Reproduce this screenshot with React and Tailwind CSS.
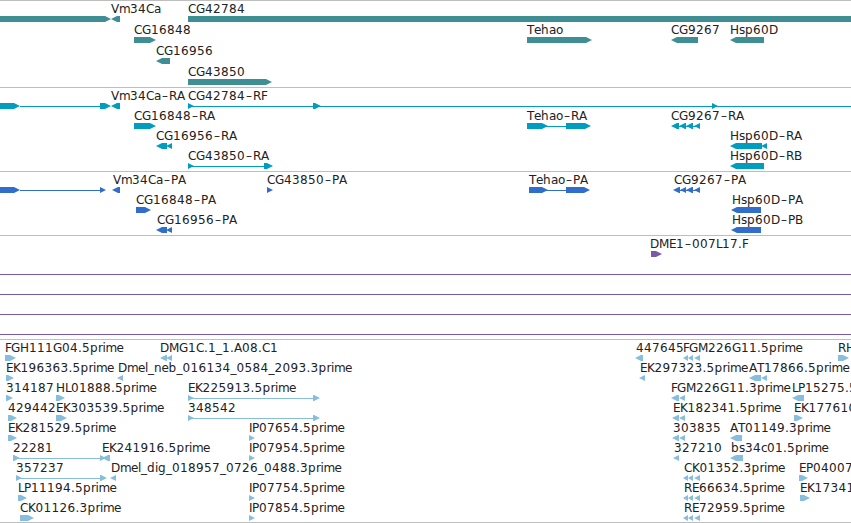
// Pen advance of each character, in px
const ADVANCE = {
  A: 8, B: 7, C: 8, D: 9, E: 7, F: 6, G: 9, H: 9, I: 3, K: 7.5, L: 6, M: 10,
  P: 7, R: 8, T: 7, V: 8, a: 7, b: 8, c: 6, d: 8, e: 7, g: 8, h: 8, i: 3,
  l: 3, m: 11, n: 7.5, o: 7, p: 8, r: 4.5, s: 6, "–": 8, ".": 4, _: 6,
};

// spans: [start, end, direction] where direction is 1 (forward) or -1 (reverse)
const f = (row, name, x, spans, lines = []) => ({ row, name, x, spans, lines });

const reads = (x) => [[x, 688, -1], [688, 693, -1], [694, 700, -1]];

const tracks = [
  {
    height: "h-[87px]",
    color: "fill-[#3f8e94]",
    pitch: 21,
    features: [
      f(0, "", 0, [[-10, 111, 1]]),
      f(0, "Vm34Ca", 111, [[111, 120, -1]]),
      f(0, "CG42784", 188, [[188, 870, 1]]),
      f(1, "CG16848", 134, [[134, 156, 1]]),
      f(1, "Tehao", 527, [[527, 592, 1]]),
      f(1, "CG9267", 671, [[671, 698, -1]]),
      f(1, "Hsp60D", 730, [[730, 764, -1]]),
      f(2, "CG16956", 156, [[156, 170, -1]]),
      f(3, "CG43850", 188, [[188, 272, 1]]),
    ],
  },
  {
    height: "h-[84px]",
    color: "fill-[#009dbf]",
    pitch: 20,
    features: [
      f(0, "", 0, [[-10, 20, 1], [100, 111, 1]], [[20, 100]]),
      f(0, "Vm34Ca–RA", 111, [[111, 120, -1]]),
      f(0, "CG42784–RF", 188, [[188, 194, 1], [313, 321, 1], [712, 718, 1]], [[188, 860]]),
      f(1, "CG16848–RA", 134, [[134, 156, 1]]),
      f(1, "Tehao–RA", 527, [[527, 548, 1], [566, 591, 1]], [[546, 566]]),
      f(1, "CG9267–RA", 671, [[671, 679, -1], [679, 686, -1], [686, 693, -1], [694, 700, -1]], [[678, 696]]),
      f(2, "CG16956–RA", 156, [[156, 167, -1], [166, 172, -1]]),
      f(2, "Hsp60D–RA", 730, [[730, 762, -1], [761, 767, -1]]),
      f(3, "CG43850–RA", 188, [[188, 194, 1], [264, 273, 1]], [[190, 264]]),
      f(3, "Hsp60D–RB", 730, [[730, 764, -1]]),
    ],
  },
  {
    height: "h-[64px]",
    color: "fill-[#316dca]",
    pitch: 20,
    features: [
      f(0, "", 0, [[-10, 20, 1], [100, 106, 1]], [[20, 100]]),
      f(0, "Vm34Ca–PA", 113, [[112, 120, -1]]),
      f(0, "CG43850–PA", 267, [[267, 273, 1]]),
      f(0, "Tehao–PA", 529, [[529, 548, 1], [566, 590, 1]], [[546, 566]]),
      f(0, "CG9267–PA", 674, [[673, 680, -1], [680, 686, -1], [686, 693, -1], [694, 700, -1]], [[678, 696]]),
      f(1, "CG16848–PA", 136, [[136, 151, 1]]),
      f(1, "Hsp60D–PA", 732, [[731, 761, -1]]),
      f(2, "CG16956–PA", 157, [[156, 167, -1], [166, 172, -1]]),
      f(2, "Hsp60D–PB", 732, [[731, 761, -1]]),
    ],
  },
  {
    height: "h-[104px]",
    color: "fill-[#775aa8]",
    pitch: 20,
    rules: [38, 58, 78, 98],
    features: [f(0, "DME1–007L17.F", 650, [[651, 662, 1]])],
  },
  {
    height: "h-[183px]",
    color: "fill-[#87bddd]",
    pitch: 20,
    features: [
      f(0, "FGH111G04.5prime", 5, [[5, 16, 1]]),
      f(0, "DMG1C.1_1.A08.C1", 160, [[160, 167, -1], [166, 172, -1]]),
      f(0, "447645", 636, [[635, 643, -1]]),
      f(0, "FGM226G11.5prime", 683, reads(683)),
      f(0, "RH", 838, [[838, 849, 1]]),
      f(1, "EK196363.5prime", 6, [[6, 14, 1]]),
      f(1, "Dmel_neb_016134_0584_2093.3prime", 118, [[117, 123, -1]]),
      f(1, "EK297323.5prime", 640, [[639, 645, -1]]),
      f(1, "AT17866.5prime", 749, [[749, 761, -1], [761, 767, -1]]),
      f(2, "314187", 6, [[6, 13, 1]]),
      f(2, "HL01888.5prime", 56, [[56, 65, 1]]),
      f(2, "EK225913.5prime", 188, [[188, 194, 1], [313, 320, 1]], [[190, 314]]),
      f(2, "FGM226G11.3prime", 671, [[671, 679, -1], [679, 685, -1]]),
      f(2, "LP15275.5", 792, [[792, 804, -1]]),
      f(3, "429442", 8, [[8, 17, 1]]),
      f(3, "EK303539.5prime", 56, [[56, 67, 1]]),
      f(3, "348542", 188, [[188, 194, 1], [313, 320, 1]], [[190, 314]]),
      f(3, "EK182341.5prime", 673, [[672, 679, -1], [679, 685, -1]]),
      f(3, "EK177610", 794, [[794, 803, 1]]),
      f(4, "EK281529.5prime", 8, [[8, 17, 1]]),
      f(4, "IP07654.5prime", 249, [[249, 255, 1]]),
      f(4, "303835", 673, [[672, 679, -1], [679, 685, -1]]),
      f(4, "AT01149.3prime", 730, [[730, 742, -1]]),
      f(5, "22281", 13, [[13, 20, 1], [100, 106, 1]], [[15, 100]]),
      f(5, "EK241916.5prime", 102, [[102, 110, -1]]),
      f(5, "IP07954.5prime", 249, [[249, 255, 1]]),
      f(5, "327210", 674, [[673, 679, -1]]),
      f(5, "bs34c01.5prime", 731, [[730, 743, -1]]),
      f(6, "357237", 16, [[16, 22, 1], [100, 107, 1]], [[18, 100]]),
      f(6, "Dmel_dig_018957_0726_0488.3prime", 111, [[110, 116, -1]]),
      f(6, "CK01352.3prime", 684, reads(683)),
      f(6, "EP04007", 799, [[799, 808, 1]]),
      f(7, "LP11194.5prime", 18, [[18, 27, 1]]),
      f(7, "IP07754.5prime", 249, [[249, 255, 1]]),
      f(7, "RE66634.5prime", 684, reads(683)),
      f(7, "EK17341", 800, [[800, 810, 1]]),
      f(8, "CK01126.3prime", 20, [[20, 34, 1]]),
      f(8, "IP07854.5prime", 249, [[249, 255, 1]]),
      f(8, "RE72959.5prime", 684, reads(683)),
    ],
  },
];

function glyphStarts(name, x) {
  let pen = x;
  return [...name].map((ch) => {
    const at = ch === "–" ? pen + 1 : pen;
    pen += ADVANCE[ch] ?? 8;
    return at;
  });
}

function Arrow({ start, end, dir, y }) {
  const head = Math.min(6, end - start);
  const points =
    dir > 0
      ? `${start},${y} ${end - head},${y} ${end},${y + 3} ${end - head},${y + 6} ${start},${y + 6}`
      : `${end},${y} ${start + head},${y} ${start},${y + 3} ${start + head},${y + 6} ${end},${y + 6}`;
  return <polygon points={points} />;
}

function Feature({ feature, pitch, color }) {
  const y = 15 + feature.row * pitch;
  return (
    <g>
      <g className={color}>
        {feature.lines.map(([a, b]) => (
          <rect key={a} x={a} y={y + 3} width={b - a} height="1" />
        ))}
        {feature.spans.map(([a, b, dir]) => (
          <Arrow key={a} start={a} end={b} dir={dir} y={y} />
        ))}
      </g>
      {feature.name && (
        <text x={glyphStarts(feature.name, feature.x).join(" ")} y={y - 3} className="fill-[#222222]">
          {feature.name}
        </text>
      )}
    </g>
  );
}

function Track({ track }) {
  return (
    <section className={`border-t border-[#bebebe] ${track.height}`}>
      <svg className="block h-full w-full overflow-hidden font-['DejaVu_Sans',sans-serif] text-[12px]">
        {track.rules?.map((y) => (
          <rect key={y} x="0" y={y} width="100%" height="1" className={track.color} />
        ))}
        {track.features.map((feature) => (
          <Feature
            key={`${feature.row}-${feature.x}`}
            feature={feature}
            pitch={track.pitch}
            color={track.color}
          />
        ))}
      </svg>
    </section>
  );
}

export default function App() {
  return (
    <main className="flex h-[523px] w-[851px] flex-col overflow-hidden border-b border-[#bebebe] bg-white">
      {tracks.map((track) => (
        <Track key={track.color} track={track} />
      ))}
    </main>
  );
}
